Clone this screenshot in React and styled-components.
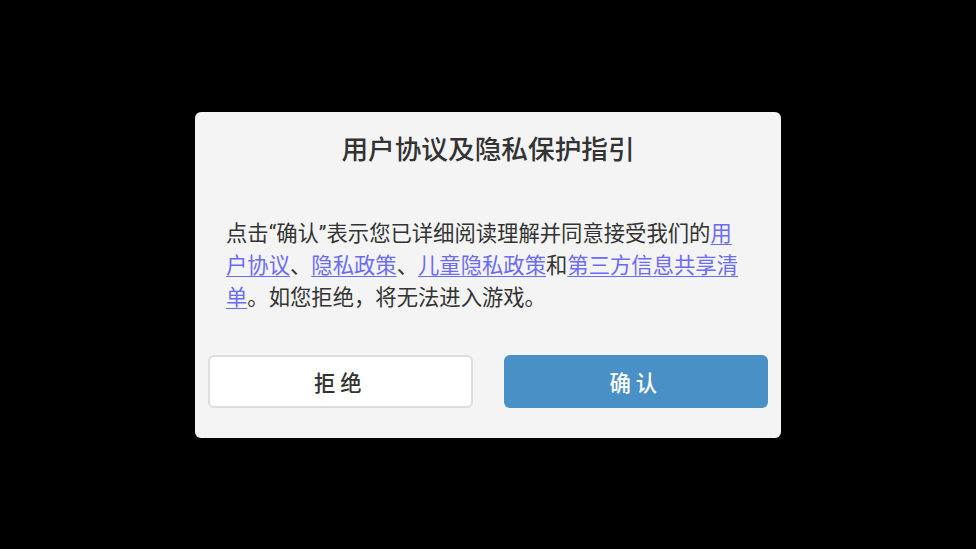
import React from "react";
import styled, { createGlobalStyle } from "styled-components";

const GlobalStyle = createGlobalStyle`
  html, body {
    margin: 0;
    padding: 0;
    background: #000;
  }
  body {
    font-family: Roboto, "Noto Sans CJK SC", sans-serif;
  }
`;

const Screen = styled.div`
  width: 976px;
  height: 549px;
  display: flex;
  align-items: center;
  justify-content: center;
  background: #000;
`;

const Dialog = styled.div`
  width: 586px;
  box-sizing: border-box;
  padding: 20px 13px 30px;
  background: #f4f4f4;
  border-radius: 6px;
  display: flex;
  flex-direction: column;
`;

const Title = styled.h2`
  margin: 0;
  height: 36px;
  line-height: 36px;
  text-align: center;
  font-size: 26.67px;
  font-weight: 500;
  color: #333;
`;

const Body = styled.p`
  margin: 50px 18px 0;
  font-size: 21.33px;
  line-height: 32px;
  color: #333;
`;

const Link = styled.a`
  color: #6b6bff;
  text-decoration: underline;
  text-underline-offset: 3px;
  text-decoration-thickness: 1px;
  cursor: pointer;
`;

const Actions = styled.div`
  margin-top: 41px;
  display: grid;
  grid-template-columns: 1fr 1fr;
  gap: 31px;
`;

const Button = styled.button`
  height: 53px;
  box-sizing: border-box;
  border-radius: 6px;
  font-family: Roboto, "Noto Sans CJK SC", sans-serif;
  font-size: 21.33px;
  font-weight: 500;
  letter-spacing: 5px;
  padding: 0;
  cursor: pointer;
  border: ${(p) => (p.$primary ? "none" : "2px solid #dddddd")};
  background: ${(p) => (p.$primary ? "#4990c6" : "#ffffff")};
  color: ${(p) => (p.$primary ? "#ffffff" : "#333333")};
`;

export default function App() {
  return (
    <>
      <GlobalStyle />
      <Screen>
        <Dialog>
          <Title>用户协议及隐私保护指引</Title>
          <Body>
            点击“确认”表示您已详细阅读理解并同意接受我们的
            <Link>用户协议</Link>、<Link>隐私政策</Link>、
            <Link>儿童隐私政策</Link>和<Link>第三方信息共享清单</Link>
            。如您拒绝，将无法进入游戏。
          </Body>
          <Actions>
            <Button>拒绝</Button>
            <Button $primary>确认</Button>
          </Actions>
        </Dialog>
      </Screen>
    </>
  );
}
